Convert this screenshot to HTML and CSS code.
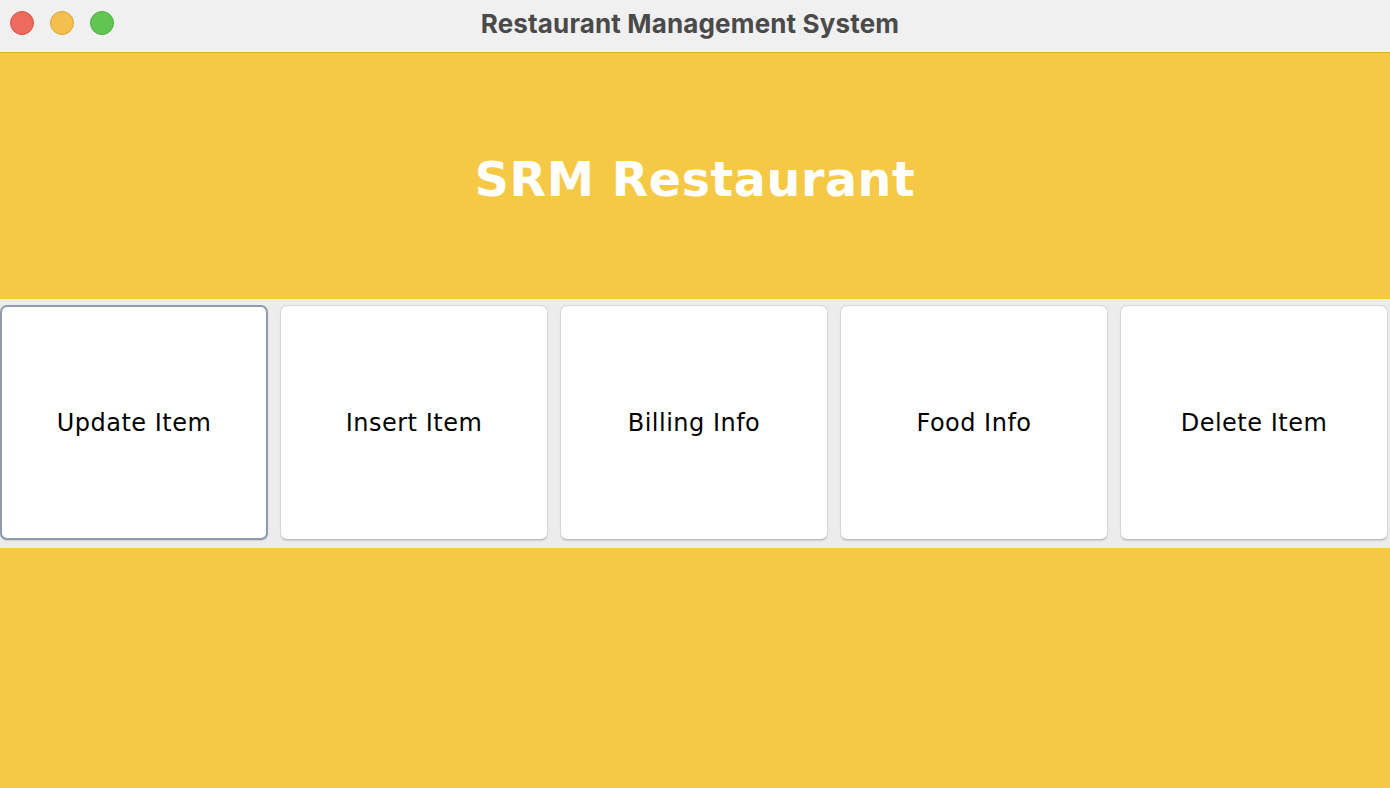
FILE: index.html
```html
<!DOCTYPE html>
<html>
<head>
<meta charset="utf-8">
<link rel="stylesheet" href="styles.css">
</head>
<body>
<div class="window">
  <div class="titlebar">
    <div class="lights">
      <span class="light red"></span>
      <span class="light yellow"></span>
      <span class="light green"></span>
    </div>
    <div class="title">Restaurant Management System</div>
  </div>
  <div class="header"><h1 class="brand">SRM Restaurant</h1></div>
  <div class="buttons">
    <button class="btn focused">Update Item</button>
    <button class="btn">Insert Item</button>
    <button class="btn">Billing Info</button>
    <button class="btn">Food Info</button>
    <button class="btn">Delete Item</button>
  </div>
  <div class="footer"></div>
</div>
</body>
</html>
```
FILE: styles.css
```css
html, body {
  margin: 0;
  padding: 0;
  width: 1390px;
  height: 788px;
  overflow: hidden;
}
.window {
  display: flex;
  flex-direction: column;
  height: 788px;
  background: #f5c945;
}
.titlebar {
  height: 52px;
  background: #f0f0f0;
  border-bottom: 1px solid #dcae2c;
  display: flex;
  align-items: center;
  justify-content: center;
  position: relative;
  flex: none;
}
.lights {
  position: absolute;
  left: 10px;
  top: 11px;
  display: flex;
  gap: 16px;
}
.light {
  width: 24px;
  height: 24px;
  border-radius: 50%;
  box-sizing: border-box;
  display: block;
}
.red { background: #ee6a5f; border: 1px solid #d4544a; }
.yellow { background: #f5bf4f; border: 1px solid #d9a53c; }
.green { background: #61c554; border: 1px solid #4eac42; }
.title {
  font-family: Inter, "Liberation Sans", sans-serif;
  font-weight: 700;
  font-size: 26px;
  color: #4a4a4a;
  margin-top: -6px;
  margin-right: 10px;
  letter-spacing: 0.15px;
}
.header {
  height: 246px;
  flex: none;
  display: flex;
  align-items: center;
  justify-content: center;
}
.brand {
  margin: 0;
  font-family: "DejaVu Sans", sans-serif;
  font-weight: 700;
  font-size: 47.5px;
  color: #ffffff;
  letter-spacing: 0.6px;
  padding-top: 6px;
}
.buttons {
  flex: none;
  height: 249px;
  background: #ececec;
  display: flex;
  gap: 12px;
  padding: 6px 2px 8px 0;
  box-sizing: border-box;
}
.btn {
  flex: none;
  width: 268px;
  box-sizing: border-box;
  background: #ffffff;
  border: 1px solid #d6d6d6;
  border-bottom-color: #bdbdbd;
  border-radius: 7px;
  box-shadow: 0 1px 1px rgba(0,0,0,0.12);
  font-family: "DejaVu Sans", sans-serif;
  font-size: 24px;
  color: #000;
  padding: 0;
  margin: 0;
  letter-spacing: 0.5px;
}
.btn.focused {
  border: 2px solid #8e9bae;
}
.footer {
  flex: 1;
}
```
